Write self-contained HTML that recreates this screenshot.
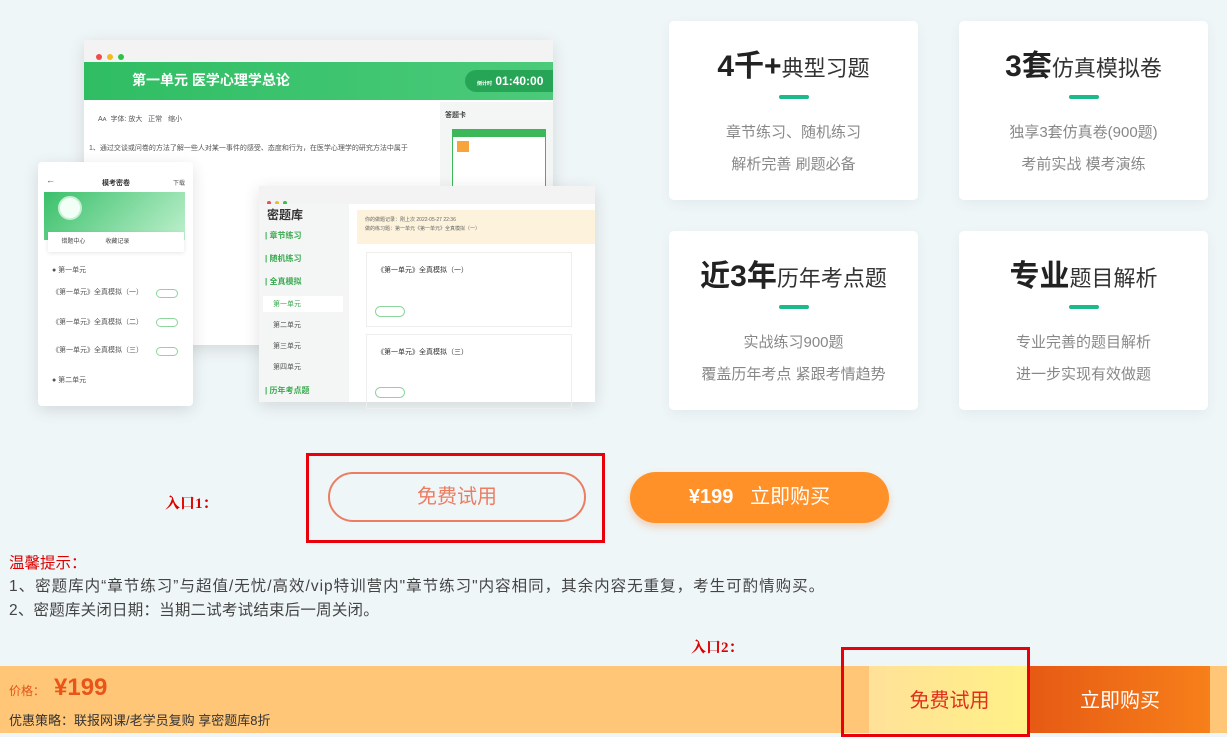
<!DOCTYPE html>
<html><head><meta charset="utf-8"><style>
*{margin:0;padding:0;box-sizing:border-box}
body{width:1227px;height:733px;overflow:hidden;background:#eff6f8;font-family:"Liberation Sans","Noto Sans CJK SC",sans-serif;position:relative}
.a{position:absolute}
.card{position:absolute;width:249px;height:179px;background:#fff;border-radius:5px;box-shadow:0 4px 12px rgba(0,60,80,.06);text-align:center}
.card h3{margin-top:28px;font-size:22px;font-weight:normal;color:#333;height:36px;line-height:36px}
.card h3 b{font-size:30px;font-weight:bold;color:#222}
.card i{display:block;width:30px;height:4px;border-radius:2px;background:#1cb98a;margin:10px auto 0}
.card p{color:#888;font-size:15px;line-height:32px}
.card .t{margin-top:18px}
.win{position:absolute;background:#fff;box-shadow:0 4px 16px rgba(0,0,0,.12)}
.dots span{display:inline-block;width:6px;height:6px;border-radius:50%;margin-right:5px}
.g{color:#3aaa50}
.sm{font-size:7px;color:#555}
</style></head><body>

<!-- big window -->
<div class="win" style="left:84px;top:40px;width:469px;height:305px">
 <div style="height:22px;background:#f3f3f3;padding:7px 12px" class="dots"><span style="background:#f04b4b"></span><span style="background:#f5b922"></span><span style="background:#2ec24b"></span></div>
 <div style="height:38px;background:linear-gradient(90deg,#2fbd63,#4bcb7a);position:relative">
  <div class="a" style="left:48px;top:8px;color:#fff;font-size:14px;font-weight:bold">第一单元 医学心理学总论</div>
  <div class="a" style="right:0;top:8px;width:88px;height:22px;background:#27a556;border-radius:11px 0 0 11px;color:#fff;font-size:12px;font-weight:bold;line-height:22px;padding-left:12px"><span style="font-size:5px">倒计时</span> 01:40:00</div>
 </div>
 <div class="a sm" style="left:14px;top:74px">A<small>A</small> &nbsp;字体: 放大 &nbsp; 正常 &nbsp; 缩小</div>
 <div class="a sm" style="left:5px;top:103px">1、通过交谈或问卷的方法了解一些人对某一事件的感受、态度和行为，在医学心理学的研究方法中属于</div>
 <div class="a" style="left:356px;top:62px;width:113px;height:243px;background:#f4f6f6"></div>
 <div class="a" style="left:361px;top:70px;font-size:7px;font-weight:bold;color:#444">答题卡</div>
 <div class="a" style="left:368px;top:89px;width:94px;height:60px;border:1px solid #3cb859;background:#fff">
  <div style="height:7px;background:#3cb859"></div>
  <div class="a" style="left:4px;top:11px;width:12px;height:11px;background:#f7a43b"></div>
 </div>
</div>

<!-- phone -->
<div class="win" style="left:38px;top:162px;width:155px;height:244px;border-radius:4px">
 <div class="a" style="left:8px;top:13px;font-size:9px;color:#555">←</div>
 <div class="a" style="left:64px;top:16px;font-size:7px;font-weight:bold;color:#333">模考密卷</div>
 <div class="a" style="left:135px;top:16px;font-size:6px;color:#555">下载</div>
 <div class="a" style="left:6px;top:30px;width:141px;height:48px;background:linear-gradient(135deg,#3ac06b,#bff0cd)"></div>
 <div class="a" style="left:20px;top:34px;width:24px;height:24px;border-radius:50%;background:#f2fff6;border:2px solid #c7f0d3"></div>
 <div class="a" style="left:10px;top:70px;width:136px;height:20px;background:#fff;box-shadow:0 1px 4px rgba(0,0,0,.1);font-size:6px;color:#444;line-height:20px">&nbsp;&nbsp;&nbsp;&nbsp;&nbsp;&nbsp;&nbsp;&nbsp;错题中心 &nbsp;&nbsp;&nbsp;&nbsp;&nbsp;&nbsp;&nbsp;&nbsp;&nbsp;&nbsp; 收藏记录</div>
 <div class="a sm" style="left:14px;top:103px">● 第一单元</div>
 <div class="a sm" style="left:14px;top:125px">《第一单元》全真模拟（一）</div>
 <div class="a sm" style="left:14px;top:155px">《第一单元》全真模拟（二）</div>
 <div class="a sm" style="left:14px;top:183px">《第一单元》全真模拟（三）</div>
 <div class="a sm" style="left:14px;top:213px">● 第二单元</div>
 <div class="a" style="left:118px;top:127px;width:22px;height:9px;border:1px solid #8dd59d;border-radius:5px"></div>
 <div class="a" style="left:118px;top:156px;width:22px;height:9px;border:1px solid #8dd59d;border-radius:5px"></div>
 <div class="a" style="left:118px;top:185px;width:22px;height:9px;border:1px solid #8dd59d;border-radius:5px"></div>
</div>

<!-- window 2 -->
<div class="win" style="left:259px;top:186px;width:336px;height:216px">
 <div style="height:18px;background:#f3f3f3;padding:6px 8px" class="dots"><span style="background:#f04b4b;width:4px;height:4px;margin-right:4px"></span><span style="background:#f5b922;width:4px;height:4px;margin-right:4px"></span><span style="background:#2ec24b;width:4px;height:4px"></span></div>
 <div class="a" style="left:0;top:18px;width:90px;height:198px;background:#f4f5f5"></div>
 <div class="a" style="left:8px;top:20px;font-size:12px;font-weight:bold;color:#333">密题库</div>
 <div class="a g" style="left:6px;top:44px;font-size:8px;font-weight:bold">| 章节练习</div>
 <div class="a g" style="left:6px;top:67px;font-size:8px;font-weight:bold">| 随机练习</div>
 <div class="a g" style="left:6px;top:90px;font-size:8px;font-weight:bold">| 全真模拟</div>
 <div class="a" style="left:4px;top:110px;width:80px;height:16px;background:#fff"></div>
 <div class="a g" style="left:14px;top:113px;font-size:7px">第一单元</div>
 <div class="a sm" style="left:14px;top:134px">第二单元</div>
 <div class="a sm" style="left:14px;top:155px">第三单元</div>
 <div class="a sm" style="left:14px;top:176px">第四单元</div>
 <div class="a g" style="left:6px;top:199px;font-size:8px;font-weight:bold">| 历年考点题</div>
 <div class="a" style="left:98px;top:24px;width:238px;height:34px;background:#fdf3dc;font-size:5px;color:#666;padding:6px 8px;line-height:9px">你的做题记录：刚上次 2022-05-27 22:36<br>做的练习题：第一单元《第一单元》全真模拟（一）</div>
 <div class="a" style="left:107px;top:66px;width:206px;height:75px;border:1px solid #eee"><div style="font-size:7px;color:#333;padding:12px 10px">《第一单元》全真模拟（一）</div><div class="a" style="left:8px;top:53px;width:30px;height:11px;border:1px solid #8dd59d;border-radius:6px"></div></div>
 <div class="a" style="left:107px;top:148px;width:206px;height:75px;border:1px solid #eee"><div style="font-size:7px;color:#333;padding:12px 10px">《第一单元》全真模拟（三）</div><div class="a" style="left:8px;top:52px;width:30px;height:11px;border:1px solid #8dd59d;border-radius:6px"></div></div>
</div>

<!-- cards -->
<div class="card" style="left:669px;top:21px"><h3><b>4千+</b>典型习题</h3><i></i><p class="t">章节练习、随机练习</p><p>解析完善 刷题必备</p></div>
<div class="card" style="left:959px;top:21px"><h3><b>3套</b>仿真模拟卷</h3><i></i><p class="t">独享3套仿真卷(900题)</p><p>考前实战 模考演练</p></div>
<div class="card" style="left:669px;top:231px"><h3><b>近3年</b>历年考点题</h3><i></i><p class="t">实战练习900题</p><p>覆盖历年考点 紧跟考情趋势</p></div>
<div class="card" style="left:959px;top:231px"><h3><b>专业</b>题目解析</h3><i></i><p class="t">专业完善的题目解析</p><p>进一步实现有效做题</p></div>

<!-- entry 1 -->
<div class="a" style="left:165px;top:492px;font-family:'Liberation Serif','Noto Serif CJK SC',serif;color:#d00;font-size:15px;font-weight:bold">入口1：</div>
<div class="a" style="left:306px;top:453px;width:299px;height:90px;border:3px solid #e8000b"></div>
<div class="a" style="left:328px;top:472px;width:258px;height:50px;border:2px solid #ec7d62;border-radius:25px;color:#ec7d62;font-size:20px;text-align:center;line-height:46px">免费试用</div>
<div class="a" style="left:630px;top:472px;width:259px;height:51px;background:#ff9128;border-radius:26px;color:#fff;font-size:20px;text-align:center;line-height:51px;box-shadow:0 4px 8px rgba(240,120,40,.3)"><b>¥199</b>&nbsp;&nbsp;&nbsp;立即购买</div>

<div class="a" style="left:9px;top:551px;color:#d00;font-size:15.5px">温馨提示：</div>
<div class="a" style="left:9px;top:574px;color:#444;font-size:15.5px;white-space:nowrap;letter-spacing:1px">1、密题库内“章节练习”与超值/无忧/高效/vip特训营内"章节练习"内容相同，其余内容无重复，考生可酌情购买。</div>
<div class="a" style="left:9px;top:598px;color:#444;font-size:15.5px;letter-spacing:0.2px">2、密题库关闭日期：当期二试考试结束后一周关闭。</div>

<div class="a" style="left:691px;top:636px;font-family:'Liberation Serif','Noto Serif CJK SC',serif;color:#d00;font-size:15px;font-weight:bold">入口2：</div>

<!-- bottom bar -->
<div class="a" style="left:0;top:666px;width:1227px;height:67px;background:#ffc677"></div>
<div class="a" style="left:9px;top:682px;color:#e2541a;font-size:12px">价格：</div>
<div class="a" style="left:54px;top:674px;color:#ea5418;font-size:24px;font-weight:bold">¥199</div>
<div class="a" style="left:9px;top:710px;color:#333;font-size:13px">优惠策略：联报网课/老学员复购 享密题库8折</div>
<div class="a" style="left:869px;top:666px;width:161px;height:67px;background:linear-gradient(90deg,#ffe199,#fff186);color:#e0301c;font-size:20px;text-align:center;line-height:70px">免费试用</div>
<div class="a" style="left:1030px;top:666px;width:180px;height:67px;background:linear-gradient(90deg,#e65a14,#f7801a);color:#fff;font-size:20px;text-align:center;line-height:70px">立即购买</div>
<div class="a" style="left:1210px;top:666px;width:17px;height:67px;background:#ffc677"></div>
<div class="a" style="left:841px;top:647px;width:189px;height:90px;border:3px solid #e8000b"></div>
</body></html>
